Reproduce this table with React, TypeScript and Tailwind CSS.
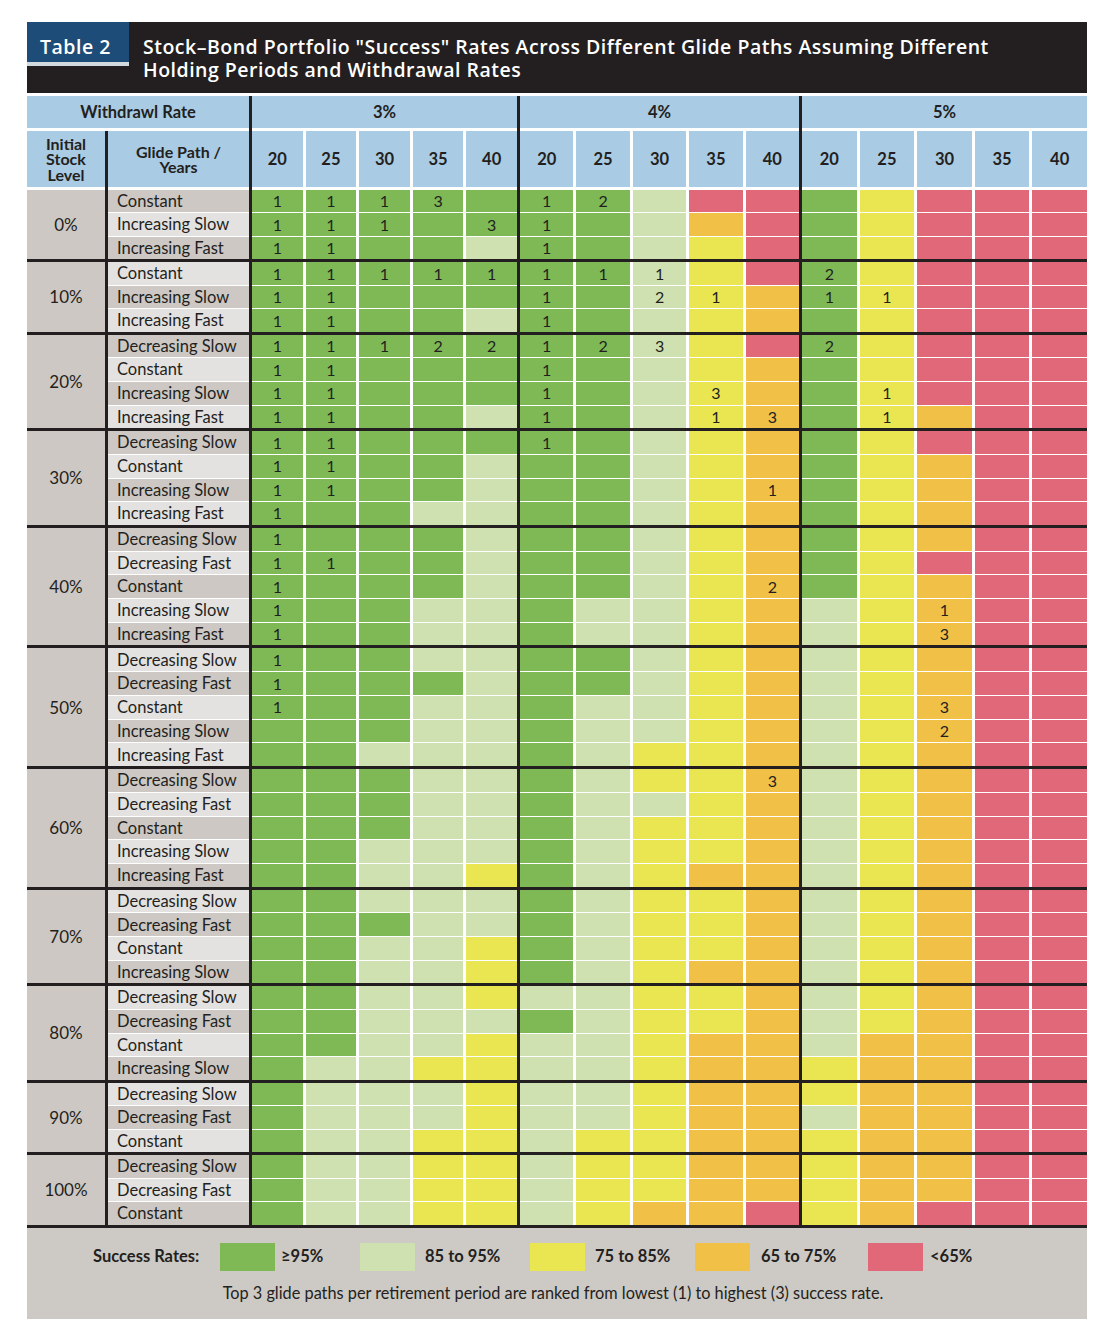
import React from "react";

const FILL: Record<string, string> = {
  G: "bg-[#7eb956]",
  L: "bg-[#cfe1b0]",
  Y: "bg-[#eae652]",
  O: "bg-[#f0c146]",
  R: "bg-[#e16878]",
};

const HEIGHTS: Record<number, string> = {
  3: "h-[69.4px]",
  4: "h-[93.5px]",
  5: "h-[117.7px]",
};

const BLOCK_W = ["w-[265px]", "w-[279px]", "w-[285px]"];

interface Row {
  path: string;
  cells: string;
  marks?: string;
}

interface Group {
  level: string;
  rows: Row[];
}

// cells: 3% | 4% | 5% (20,25,30,35,40 years each); marks: rank digits, "." = none
const groups: Group[] = [
  {
    level: "0%",
    rows: [
      { path: "Constant", cells: "GGGGG GGLRR GYRRR", marks: "1113. 12... ....." },
      { path: "Increasing Slow", cells: "GGGGG GGLOR GYRRR", marks: "111.3 1.... ....." },
      { path: "Increasing Fast", cells: "GGGGL GGLYR GYRRR", marks: "11... 1.... ....." },
    ],
  },
  {
    level: "10%",
    rows: [
      { path: "Constant", cells: "GGGGG GGLYR GYRRR", marks: "11111 111.. 2...." },
      { path: "Increasing Slow", cells: "GGGGG GGLYO GYRRR", marks: "11... 1.21. 11..." },
      { path: "Increasing Fast", cells: "GGGGL GGLYO GYRRR", marks: "11... 1.... ....." },
    ],
  },
  {
    level: "20%",
    rows: [
      { path: "Decreasing Slow", cells: "GGGGG GGLYR GYRRR", marks: "11122 123.. 2...." },
      { path: "Constant", cells: "GGGGG GGLYO GYRRR", marks: "11... 1.... ....." },
      { path: "Increasing Slow", cells: "GGGGG GGLYO GYRRR", marks: "11... 1..3. .1..." },
      { path: "Increasing Fast", cells: "GGGGL GGLYO GYORR", marks: "11... 1..13 .1..." },
    ],
  },
  {
    level: "30%",
    rows: [
      { path: "Decreasing Slow", cells: "GGGGG GGLYO GYRRR", marks: "11... 1.... ....." },
      { path: "Constant", cells: "GGGGL GGLYO GYORR", marks: "11... ..... ....." },
      { path: "Increasing Slow", cells: "GGGGL GGLYO GYORR", marks: "11... ....1 ....." },
      { path: "Increasing Fast", cells: "GGGLL GGLYO GYORR", marks: "1.... ..... ....." },
    ],
  },
  {
    level: "40%",
    rows: [
      { path: "Decreasing Slow", cells: "GGGGL GGLYO GYORR", marks: "1.... ..... ....." },
      { path: "Decreasing Fast", cells: "GGGGL GGLYO GYRRR", marks: "11... ..... ....." },
      { path: "Constant", cells: "GGGGL GGLYO GYORR", marks: "1.... ....2 ....." },
      { path: "Increasing Slow", cells: "GGGLL GLLYO LYORR", marks: "1.... ..... ..1.." },
      { path: "Increasing Fast", cells: "GGGLL GLLYO LYORR", marks: "1.... ..... ..3.." },
    ],
  },
  {
    level: "50%",
    rows: [
      { path: "Decreasing Slow", cells: "GGGLL GGLYO LYORR", marks: "1.... ..... ....." },
      { path: "Decreasing Fast", cells: "GGGGL GGLYO LYORR", marks: "1.... ..... ....." },
      { path: "Constant", cells: "GGGLL GLLYO LYORR", marks: "1.... ..... ..3.." },
      { path: "Increasing Slow", cells: "GGGLL GLLYO LYORR", marks: "..... ..... ..2.." },
      { path: "Increasing Fast", cells: "GGLLL GLYYO LYORR" },
    ],
  },
  {
    level: "60%",
    rows: [
      { path: "Decreasing Slow", cells: "GGGLL GLYYO LYORR", marks: "..... ....3 ....." },
      { path: "Decreasing Fast", cells: "GGGLL GLLYO LYORR" },
      { path: "Constant", cells: "GGGLL GLYYO LYORR" },
      { path: "Increasing Slow", cells: "GGLLL GLYYO LYORR" },
      { path: "Increasing Fast", cells: "GGLLY GLYOO LYORR" },
    ],
  },
  {
    level: "70%",
    rows: [
      { path: "Decreasing Slow", cells: "GGLLL GLYYO LYORR" },
      { path: "Decreasing Fast", cells: "GGGLL GLYYO LYORR" },
      { path: "Constant", cells: "GGLLY GLYYO LYORR" },
      { path: "Increasing Slow", cells: "GGLLY GLYOO LYORR" },
    ],
  },
  {
    level: "80%",
    rows: [
      { path: "Decreasing Slow", cells: "GGLLY LLYYO LYORR" },
      { path: "Decreasing Fast", cells: "GGLLL GLYYO LYORR" },
      { path: "Constant", cells: "GGLLY LLYOO LOORR" },
      { path: "Increasing Slow", cells: "GLLYY LLYOO YOORR" },
    ],
  },
  {
    level: "90%",
    rows: [
      { path: "Decreasing Slow", cells: "GLLLY LLYOO YOORR" },
      { path: "Decreasing Fast", cells: "GLLLY LLYOO LOORR" },
      { path: "Constant", cells: "GLLYY LYYOO YOORR" },
    ],
  },
  {
    level: "100%",
    rows: [
      { path: "Decreasing Slow", cells: "GLLYY LYYOO YOORR" },
      { path: "Decreasing Fast", cells: "GLLYY LYYOO YOORR" },
      { path: "Constant", cells: "GLLYY LYOOR YORRR" },
    ],
  },
];

const YEARS = ["20", "25", "30", "35", "40"];
const RATES = ["3%", "4%", "5%"];

function Bar() {
  return <div className="w-[3px] shrink-0 self-stretch bg-[#231f20]" />;
}

function Band({ group, start }: { group: Group; start: number }) {
  const rows = group.rows.map((r) => ({
    path: r.path,
    cells: r.cells.replace(/ /g, ""),
    marks: (r.marks ?? "...............").replace(/ /g, ""),
  }));

  return (
    <div className={`flex ${HEIGHTS[rows.length]}`}>
      <div className="w-[78px] shrink-0 bg-[#cdc8c3] flex items-center justify-center text-[17px]">
        {group.level}
      </div>
      <Bar />
      <div className="w-[141px] shrink-0 flex flex-col gap-px bg-white">
        {rows.map((r, i) => (
          <div
            key={r.path + i}
            className={`flex-1 min-h-0 flex items-center pl-[9px] leading-none text-[16.5px] ${
              (start + i) % 2 === 0 ? "bg-[#cdc8c3]" : "bg-[#e3e2e1]"
            }`}
          >
            {r.path}
          </div>
        ))}
      </div>
      {[0, 1, 2].map((b) => (
        <React.Fragment key={b}>
          <Bar />
          <div className={`${BLOCK_W[b]} shrink-0 flex flex-col gap-px bg-white`}>
            {rows.map((r, i) => (
              <div key={i} className="flex-1 min-h-0 flex gap-[3px]">
                {[0, 1, 2, 3, 4].map((c) => {
                  const k = b * 5 + c;
                  const m = r.marks[k];
                  return (
                    <div
                      key={c}
                      className={`flex-1 flex items-center justify-center leading-none text-[16px] ${FILL[r.cells[k]]}`}
                    >
                      {m !== "." ? m : ""}
                    </div>
                  );
                })}
              </div>
            ))}
          </div>
        </React.Fragment>
      ))}
    </div>
  );
}

function Swatch({ code }: { code: string }) {
  return <div className={`w-[55px] h-[28px] shrink-0 ${FILL[code]}`} />;
}

export default function App() {
  let start = 0;
  const bands = groups.map((g) => {
    const s = start;
    start += g.rows.length;
    return (
      <React.Fragment key={g.level}>
        <Band group={g} start={s} />
        <div className="h-[3px] bg-[#231f20]" />
      </React.Fragment>
    );
  });

  return (
    <div className="w-[1108px] min-h-[1336px] bg-white pt-[22px] pl-[27px] text-[#231f20] font-['Lato',sans-serif]">
      <div className="w-[1060px]">
        {/* title bar */}
        <div className="flex h-[71px] bg-[#231f20] text-white font-['Open_Sans',sans-serif] font-semibold tracking-[0.5px]">
          <div className="w-[102px] shrink-0 flex flex-col">
            <div className="h-[40px] bg-[#1e4c78] pl-[13px] pt-[13px] text-[19.5px] leading-[23px]">Table 2</div>
            <div className="h-[4px] bg-[#d3dade]" />
          </div>
          <div className="pl-[14px] pt-[13px] text-[19.5px] leading-[23px]">
            Stock–Bond Portfolio "Success" Rates Across Different Glide Paths Assuming Different
            <br />
            Holding Periods and Withdrawal Rates
          </div>
        </div>

        {/* header row 1 */}
        <div className="flex mt-[3px] font-bold text-[16.5px]">
          <div className="w-[222px] h-[32px] mb-[3px] bg-[#a9cbe4] flex items-center justify-center">
            Withdrawl Rate
          </div>
          {RATES.map((r, b) => (
            <React.Fragment key={r}>
              <Bar />
              <div className={`${BLOCK_W[b]} h-[32px] mb-[3px] bg-[#a9cbe4] flex items-center justify-center`}>
                {r}
              </div>
            </React.Fragment>
          ))}
        </div>

        {/* header row 2 */}
        <div className="flex font-bold text-[16.5px]">
          <div className="w-[78px] h-[56px] mb-[3px] bg-[#a9cbe4] flex items-center justify-center text-center text-[16px] leading-[15.5px]">
            Initial
            <br />
            Stock
            <br />
            Level
          </div>
          <Bar />
          <div className="w-[141px] h-[56px] mb-[3px] bg-[#a9cbe4] flex items-center justify-center text-center text-[16px] leading-[15.5px]">
            Glide Path /
            <br />
            Years
          </div>
          {RATES.map((r, b) => (
            <React.Fragment key={r}>
              <Bar />
              <div className={`${BLOCK_W[b]} h-[56px] mb-[3px] flex gap-[3px] bg-white`}>
                {YEARS.map((y) => (
                  <div key={y} className="flex-1 bg-[#a9cbe4] flex items-center justify-center">
                    {y}
                  </div>
                ))}
              </div>
            </React.Fragment>
          ))}
        </div>

        {bands}

        {/* legend */}
        <div className="h-[91px] bg-[#cdc9c4] pt-[15px]">
          <div className="flex items-center h-[28px] pl-[66px] text-[16.5px]">
            <div className="w-[127px] shrink-0 font-bold">Success Rates:</div>
            <div className="w-[140px] shrink-0 flex items-center">
              <Swatch code="G" />
              <span className="ml-[6px] font-bold">≥95%</span>
            </div>
            <div className="w-[170px] shrink-0 flex items-center">
              <Swatch code="L" />
              <span className="ml-[10px] font-bold">85 to 95%</span>
            </div>
            <div className="w-[165px] shrink-0 flex items-center">
              <Swatch code="Y" />
              <span className="ml-[10px] font-bold">75 to 85%</span>
            </div>
            <div className="w-[173px] shrink-0 flex items-center">
              <Swatch code="O" />
              <span className="ml-[11px] font-bold">65 to 75%</span>
            </div>
            <div className="flex items-center">
              <Swatch code="R" />
              <span className="ml-[7px] font-bold">&lt;65%</span>
            </div>
          </div>
          <div className="mt-[12px] text-center text-[16.3px] leading-[20px] pr-[8px]">
            Top 3 glide paths per retirement period are ranked from lowest (1) to highest (3) success rate.
          </div>
        </div>
      </div>
    </div>
  );
}
